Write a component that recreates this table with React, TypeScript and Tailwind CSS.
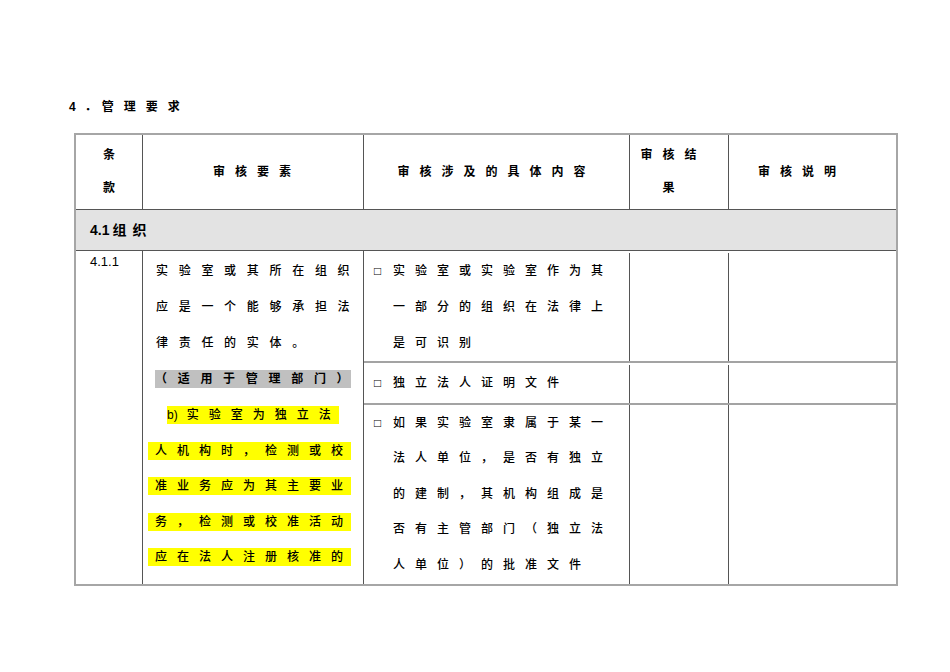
const font = "font-['Liberation_Sans','Noto_Sans_CJK_SC',sans-serif]";

const reqTop = ["实验室或其所在组织", "应是一个能够承担法", "律责任的实体。"];
const reqYellow = [
  "人机构时，检测或校",
  "准业务应为其主要业",
  "务，检测或校准活动",
  "应在法人注册核准的",
];

const checks = [
  { lines: ["实验室或实验室作为其", "一部分的组织在法律上", "是可识别"], cls: "h-[112px] pt-[2px] border-b-2 border-[#a3a3a3]", lh: "h-[36px]" },
  { lines: ["独立法人证明文件"], cls: "h-[42px] pt-[2px] border-b-2 border-[#a3a3a3]", lh: "h-[36px]" },
  {
    lines: [
      "如果实验室隶属于某一",
      "法人单位，是否有独立",
      "的建制，其机构组成是",
      "否有主管部门（独立法",
      "人单位）的批准文件",
    ],
    cls: "flex-1",
    lh: "h-[35.5px]",
  },
];

export default function App() {
  return (
    <div className={`w-[950px] h-[672px] bg-white text-black pt-[99px] ${font}`}>
      {/* heading */}
      <div className="ml-[69px] h-[16px] leading-[16px] text-[12px] font-bold flex">
        <span>4</span>
        <span className="ml-[9px]">．</span>
        <span className="ml-[5px] tracking-[10px]">管理要求</span>
      </div>

      <div className="mt-[18px] ml-[74px] w-[824px] border-2 border-[#a6a6a6]">
        {/* header */}
        <div className="flex h-[75px] border-b border-[#555] text-[12px] font-bold">
          <div className="w-[67px] border-r border-[#555] flex flex-col items-center justify-center">
            <div className="h-[33px] leading-[33px]">条</div>
            <div className="h-[33px] leading-[33px]">款</div>
          </div>
          <div className="w-[221px] border-r border-[#555] flex items-center justify-center pl-[8px] tracking-[10px]">
            审核要素
          </div>
          <div className="w-[266px] border-r border-[#555] flex items-center justify-center tracking-[10px]">
            审核涉及的具体内容
          </div>
          <div className="w-[99px] border-r border-[#555] flex flex-col items-center justify-center pr-[11px] tracking-[10px]">
            <div className="h-[33px] leading-[33px]">审核结</div>
            <div className="h-[33px] leading-[33px]">果</div>
          </div>
          <div className="flex-1 flex items-center justify-center pr-[21px] tracking-[10px]">审核说明</div>
        </div>

        {/* group row */}
        <div className="h-[41px] bg-[#e3e3e3] border-b border-[#555] flex items-center pl-[14px] text-[14px] font-bold">
          <span>4.1</span>
          <span className="ml-[3px] tracking-[6px]">组织</span>
        </div>

        {/* data */}
        <div className="flex h-[333px]">
          <div className="w-[67px] border-r border-[#555] pt-[3px] pl-[14px] text-[13px] leading-[16px]">4.1.1</div>

          <div className="w-[221px] border-r border-[#555] pt-[2px] pl-[5px] text-[12px] font-medium">
            {reqTop.map((t) => (
              <div key={t} className="h-[36px] flex items-center pl-[8px] tracking-[10.7px] whitespace-nowrap">
                {t}
              </div>
            ))}
            <div className="h-[36px] flex items-center">
              <div className="ml-[7px] w-[196px] h-[18px] leading-[18px] bg-[#c0c0c0] font-bold tracking-[10.7px] whitespace-nowrap">
                （适用于管理部门）
              </div>
            </div>
            <div className="h-[36px] flex items-center">
              <div className="ml-[19px] w-[172px] h-[18px] leading-[18px] bg-[#ffff00] whitespace-nowrap flex">
                <span>b)</span>
                <span className="ml-[9px] tracking-[10px]">实验室为独立法</span>
              </div>
            </div>
            {reqYellow.map((t) => (
              <div key={t} className="h-[35.5px] flex items-center">
                <div className="w-[203px] h-[18px] leading-[18px] pl-[7px] bg-[#ffff00] tracking-[10px] whitespace-nowrap">
                  {t}
                </div>
              </div>
            ))}
          </div>

          <div className="flex-1 flex flex-col">
            {checks.map((c, i) => (
              <div key={i} className={`flex ${c.cls}`}>
                <div className="w-[266px] border-r border-[#555] pl-[10px] text-[12px] font-medium">
                  {c.lines.map((t, j) => (
                    <div key={j} className={`${c.lh} flex items-center whitespace-nowrap`}>
                      <span className="w-[19px] shrink-0">{j === 0 ? "□" : ""}</span>
                      <span className="tracking-[10px]">{t}</span>
                    </div>
                  ))}
                </div>
                <div className="w-[99px] border-r border-[#555]" />
                <div className="flex-1" />
              </div>
            ))}
          </div>
        </div>
      </div>
    </div>
  );
}
